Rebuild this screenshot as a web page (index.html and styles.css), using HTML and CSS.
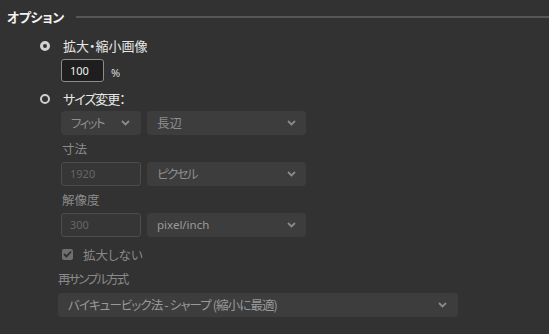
FILE: index.html
```html
<!DOCTYPE html>
<html lang="ja">
<head>
<meta charset="utf-8">
<link rel="stylesheet" href="styles.css">
</head>
<body>
<div class="panel">
  <div class="header">
    <span class="title">オプション</span>
    <span class="rule"></span>
  </div>

  <div class="radio-row first">
    <span class="radio checked"></span>
    <span class="radio-label">拡大・縮小画像</span>
  </div>
  <div class="scale-row">
    <div class="input active">100</div>
    <span class="unit">%</span>
  </div>

  <div class="radio-row second">
    <span class="radio"></span>
    <span class="radio-label kana">サイズ変更：</span>
  </div>

  <div class="sub">
    <div class="field-row">
      <div class="select small"><span class="kana2">フィット</span><svg class="chev" width="9" height="6" viewBox="0 0 9 6"><path d="M1 1l3.5 3.5L8 1" fill="none" stroke="currentColor" stroke-width="1.8"/></svg></div>
      <div class="select wide"><span>長辺</span><svg class="chev" width="9" height="6" viewBox="0 0 9 6"><path d="M1 1l3.5 3.5L8 1" fill="none" stroke="currentColor" stroke-width="1.8"/></svg></div>
    </div>
    <div class="label">寸法</div>
    <div class="field-row">
      <div class="input disabled small">1920</div>
      <div class="select wide"><span class="kana2">ピクセル</span><svg class="chev" width="9" height="6" viewBox="0 0 9 6"><path d="M1 1l3.5 3.5L8 1" fill="none" stroke="currentColor" stroke-width="1.8"/></svg></div>
    </div>
    <div class="label">解像度</div>
    <div class="field-row">
      <div class="input disabled small">300</div>
      <div class="select wide latin"><span>pixel/inch</span><svg class="chev" width="9" height="6" viewBox="0 0 9 6"><path d="M1 1l3.5 3.5L8 1" fill="none" stroke="currentColor" stroke-width="1.8"/></svg></div>
    </div>
    <div class="check-row">
      <span class="checkbox"><svg width="9" height="8" viewBox="0 0 9 8"><path d="M1 4l2.5 2.5L8 1.5" fill="none" stroke="#2e2e2e" stroke-width="1.8"/></svg></span>
      <span class="check-label">拡大しない</span>
    </div>
  </div>

  <div class="resample">
    <div class="label kana3">再サンプル方式</div>
    <div class="select full"><span class="kana4">バイキュービック法 - シャープ (縮小に最適)</span><svg class="chev" width="9" height="6" viewBox="0 0 9 6"><path d="M1 1l3.5 3.5L8 1" fill="none" stroke="currentColor" stroke-width="1.8"/></svg></div>
  </div>
</div>
</body>
</html>
```

FILE: styles.css
```css
html, body {
  margin: 0;
  padding: 0;
  background: #323232;
}
body {
  width: 549px;
  height: 334px;
  overflow: hidden;
  font-family: "Noto Sans CJK JP", "Noto Sans", sans-serif;
  font-size: 12.5px;
  font-feature-settings: "palt";
  color: #8c8c8c;
  white-space: nowrap;
}
.panel {
  display: flex;
  flex-direction: column;
}
.header {
  height: 33px;
  display: flex;
  align-items: center;
  padding-left: 7px;
}
.title {
  color: #f2f2f2;
  font-weight: bold;
  font-size: 13px;
  letter-spacing: -0.4px;
  line-height: 20px;
}
.rule {
  flex: 1;
  height: 2px;
  background: #575757;
  margin-left: 12px;
}
.radio-row {
  display: flex;
  align-items: center;
  height: 20px;
  padding-left: 40px;
}
.radio-row.first { margin-top: 3px; }
.radio-row.second { margin-top: 7px; }
.radio {
  flex: none;
  width: 10px;
  height: 10px;
  box-sizing: border-box;
  border-radius: 50%;
  border: 2px solid #cfcfcf;
  background: #323232;
  margin-right: 13px;
}
.radio.checked {
  background: #323232;
  border: 3.5px solid #d2d2d2;
}
.radio-label {
  color: #e8e8e8;
  line-height: 20px;
  font-size: 13px;
}
.kana { letter-spacing: -1px; }
.kana2 { letter-spacing: -1.6px; }
.kana3 { letter-spacing: -2px; }
.kana4 { letter-spacing: -0.9px; }
.scale-row {
  display: flex;
  align-items: center;
  padding-left: 61px;
  margin-top: 3px;
}
.input {
  flex: none;
  box-sizing: border-box;
  height: 23px;
  border-radius: 3px;
  font-family: "Noto Sans", "Noto Sans CJK JP", sans-serif;
  font-size: 11px;
  line-height: 21px;
  padding-left: 8px;
}
.input.active {
  width: 43px;
  background: #1e1e1e;
  border: 1px solid #8c8c8c;
  color: #f0f0f0;
}
.input.disabled {
  background: #363636;
  border: 1px solid #4c4c4c;
  color: #666666;
  height: 24px;
  line-height: 22px;
}
.unit {
  color: #dcdcdc;
  font-family: "Noto Sans", sans-serif;
  font-size: 11px;
  margin-left: 7px;
  margin-top: 3px;
}
.sub {
  display: flex;
  flex-direction: column;
  padding-left: 61px;
  margin-top: 2px;
}
.field-row {
  display: flex;
  gap: 6px;
}
.select {
  flex: none;
  box-sizing: border-box;
  height: 24px;
  background: #3d3d3d;
  border-radius: 4px;
  display: flex;
  align-items: center;
  justify-content: space-between;
  padding: 0 11px 0 10px;
  color: #8e8e8e;
  line-height: 24px;
}
.select.latin span {
  font-family: "Noto Sans", sans-serif;
  font-size: 11.5px;
  color: #9a9a9a;
}
.chev {
  flex: none;
  color: #8a8a8a;
}
.small { width: 80px; }
.wide { width: 159px; padding-right: 10px; }
.full { width: 400px; color: #9a9a9a; }
.label {
  line-height: 20px;
  height: 20px;
  margin: 4px 0 3px 1px;
  color: #8a8a8a;
}
.check-row {
  display: flex;
  align-items: center;
  height: 20px;
  margin-top: 7px;
}
.checkbox {
  flex: none;
  width: 11px;
  height: 11px;
  margin-left: 1px;
  background: #6f6f6f;
  border-radius: 2px;
  display: flex;
  align-items: center;
  justify-content: center;
  margin-right: 10px;
}
.check-label {
  color: #8a8a8a;
}
.resample {
  display: flex;
  flex-direction: column;
  padding-left: 58px;
}
.resample .label {
  margin: 5px 0 4px 0;
}
```
